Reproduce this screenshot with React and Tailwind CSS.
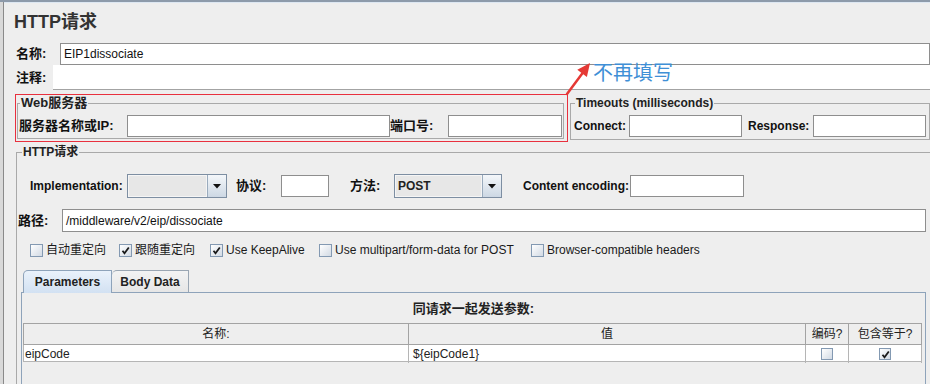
import React from "react";

const FONT = "font-['Liberation_Sans','Noto_Sans_CJK_SC',sans-serif]";

function TextBox({ className = "", children }) {
  return (
    <div className={`bg-white border border-[#8e8e8e] h-[22px] flex items-center px-[3px] text-[12px] text-[#111] ${className}`}>
      {children}
    </div>
  );
}

function Combo({ value, className = "" }) {
  return (
    <div className={`flex h-[24px] border border-[#7d8ea2] ${className}`}>
      <div className="flex-1 flex items-center px-[2px] bg-[#e7e7e7] border border-[#f5f5f5] text-[12px] font-bold text-[#222]">{value}</div>
      <div className="w-[19px] flex items-center justify-center border-l border-[#9aabbd] bg-linear-to-b from-[#f4f7fa] to-[#cdd8e4]">
        <svg width="8" height="5" viewBox="0 0 8 5"><path d="M0 0h8L4 4.5z" fill="#111" /></svg>
      </div>
    </div>
  );
}

function Check({ checked, small }) {
  return (
    <span className={`${small ? "w-[12px] h-[12px]" : "w-[13px] h-[13px]"} shrink-0 inline-flex items-center justify-center border border-[#8399b2] bg-linear-to-br from-[#ffffff] to-[#d2dae4]`}>
      {checked && (
        <svg width="9" height="9" viewBox="0 0 9 9">
          <path d="M1.5 4.8 L3.5 7.3 L7.8 1.5" stroke="#1a1a1a" strokeWidth="1.8" fill="none" />
        </svg>
      )}
    </span>
  );
}

function CheckItem({ checked, label, className }) {
  return (
    <div className={`flex items-center gap-[3px] text-[12px] text-[#1a1a1a] ${className}`}>
      <Check checked={checked} />
      <span>{label}</span>
    </div>
  );
}

export default function App() {
  return (
    <div className={`relative w-[930px] h-[384px] overflow-hidden bg-[#eeeeee] text-[#111] ${FONT}`}>
      <div className="h-[2px] bg-[#8d9aaa]" />
      <div className="h-[382px] flex">
        <div className="w-[3px] bg-[#d9d9d9]" />
        <div className="w-px bg-[#8a8a8a]" />
        <div className="flex-1 min-w-0">
          {/* title */}
          <div className="h-[41px] border-t border-[#dde7f2] pl-[10px] pt-[8px] text-[18px] font-bold leading-[22px] text-[#333]">
            HTTP请求
          </div>

          {/* name */}
          <div className="flex h-[21px] items-center pl-[12px]">
            <span className="w-[44px] text-[13px] font-bold">名称:</span>
            <TextBox className="flex-1 h-[21px]">EIP1dissociate</TextBox>
          </div>

          {/* comment */}
          <div className="mt-[1px] flex h-[25px]">
            <span className="pl-[12px] w-[49px] flex items-center text-[13px] font-bold">注释:</span>
            <div className="flex-1 bg-white border-b border-[#a3a3a3]" />
          </div>

          {/* web server + timeouts */}
          <div className="mt-[4px] flex items-start">
            <div className="ml-[11px] w-[553px] h-[48px] p-[2px] ring-1 ring-inset ring-[#e8303e]">
              <fieldset className="w-[547px] h-[43px] border border-[#a9a9a9]">
                <legend className="ml-[2px] px-[1px] text-[13px] font-bold leading-[14px] text-[#222]">Web服务器</legend>
                <div className="mt-[5px] flex items-center pl-[1px]">
                  <span className="w-[108px] text-[13px] font-bold">服务器名称或IP:</span>
                  <TextBox className="w-[263px]" />
                  <span className="w-[58px] text-[13px] font-bold">端口号:</span>
                  <TextBox className="w-[114px]" />
                </div>
              </fieldset>
            </div>
            <fieldset className="ml-[2px] mt-[2px] w-[360px] pb-[2px] border border-[#a9a9a9]">
              <legend className="ml-[4px] px-[1px] text-[12px] font-bold leading-[14px] text-[#222]">Timeouts (milliseconds)</legend>
              <div className="mt-[5px] flex items-center pl-[3px]">
                <span className="w-[55px] text-[12px] font-bold">Connect:</span>
                <TextBox className="w-[113px]" />
                <span className="ml-[6px] w-[65px] text-[12px] font-bold">Response:</span>
                <TextBox className="w-[113px]" />
              </div>
            </fieldset>
          </div>

          {/* http request group */}
          <fieldset className="mt-[3px] ml-[12px] h-[260px] border-l border-t border-[#a9a9a9]">
            <legend className="ml-[5px] px-[1px] text-[12px] font-bold leading-[14px] text-[#222]">HTTP请求</legend>

            <div className="mt-[15px] flex h-[24px] items-center pl-[13px] text-[12px] font-bold">
              <span className="w-[97px]">Implementation:</span>
              <Combo className="w-[100px]" />
              <span className="ml-[9px] w-[45px] text-[13px]">协议:</span>
              <TextBox className="w-[48px]" />
              <span className="ml-[21px] w-[44px] text-[13px]">方法:</span>
              <Combo className="w-[108px]" value="POST" />
              <span className="ml-[21px] w-[107px]">Content encoding:</span>
              <TextBox className="w-[114px]" />
            </div>

            <div className="mt-[11px] flex h-[23px] items-center pl-[1px]">
              <span className="w-[44px] text-[13px] font-bold">路径:</span>
              <TextBox className="flex-1 h-[23px] mr-[4px]">/middleware/v2/eip/dissociate</TextBox>
            </div>

            <div className="mt-[11px] flex h-[14px] items-center pl-[13px]">
              <CheckItem className="w-[89px]" label="自动重定向" />
              <CheckItem className="w-[91px]" checked label="跟随重定向" />
              <CheckItem className="w-[109px]" checked label="Use KeepAlive" />
              <CheckItem className="w-[212px]" label="Use multipart/form-data for POST" />
              <CheckItem label="Browser-compatible headers" />
            </div>

            {/* tabs */}
            <div className="mt-[13px] ml-[4px]">
              <div className="flex items-end pl-[2px] h-[22px]">
                <div className="relative z-10 -mb-px w-[89px] h-[23px] pb-px flex items-center justify-center border-t border-l border-r border-[#8ea3ba] rounded-tl-[5px] bg-linear-to-b from-[#eaf2fb] to-[#d2e1f2] text-[12px] font-bold text-[#222]">
                  Parameters
                </div>
                <div className="w-[77px] h-[22px] flex items-center justify-center border-t border-r border-[#9aa6b3] rounded-tl-[5px] bg-linear-to-b from-[#f3f3f3] to-[#e6e6e6] text-[12px] font-bold text-[#222]">
                  Body Data
                </div>
              </div>
              <div className="mr-[4px] h-[100px] border-l border-t border-r border-[#8ea3ba]">
                <div className="h-[30px] pt-[9px] text-center text-[13px] font-bold leading-[14px] text-[#222]">
                  同请求一起发送参数:
                </div>
                <div className="ml-[1px] mr-[3px]">
                  <div className="grid grid-cols-[385px_397px_43px_73px] h-[22px] border-t border-b border-l border-[#a3a3a3] text-[12px] text-[#222]">
                    <div className="flex items-center justify-center border-r border-[#a3a3a3]">名称:</div>
                    <div className="flex items-center justify-center border-r border-[#a3a3a3]">值</div>
                    <div className="flex items-center justify-center border-r border-[#a3a3a3]">编码?</div>
                    <div className="flex items-center justify-center border-r border-[#a3a3a3]">包含等于?</div>
                  </div>
                  <div className="grid grid-cols-[385px_397px_43px_73px] h-[17px] bg-white border-b border-l border-[#b5b5b5] text-[12px] text-[#222]">
                    <div className="flex items-center pl-px border-r border-[#b5b5b5]">eipCode</div>
                    <div className="flex items-center pl-[4px] border-r border-[#b5b5b5]">{"${eipCode1}"}</div>
                    <div className="flex items-center justify-center border-r border-[#b5b5b5]"><Check small /></div>
                    <div className="flex items-center justify-center border-r border-[#b5b5b5]"><Check small checked /></div>
                  </div>
                </div>
              </div>
            </div>
          </fieldset>
        </div>
      </div>

      {/* annotation */}
      <svg className="absolute left-[560px] top-[55px]" width="40" height="45" viewBox="0 0 40 45">
        <line x1="7" y1="39" x2="23" y2="17.5" stroke="#e53935" strokeWidth="2.5" strokeLinecap="round" />
        <path d="M30 8 L26.9 21.9 L17.3 14.7 Z" fill="#e53935" />
      </svg>
      <div className="absolute left-[593px] top-[59px] text-[20px] leading-[26px] text-[#3f8fd6] font-['Noto_Sans_CJK_SC',sans-serif]">
        不再填写
      </div>
    </div>
  );
}
